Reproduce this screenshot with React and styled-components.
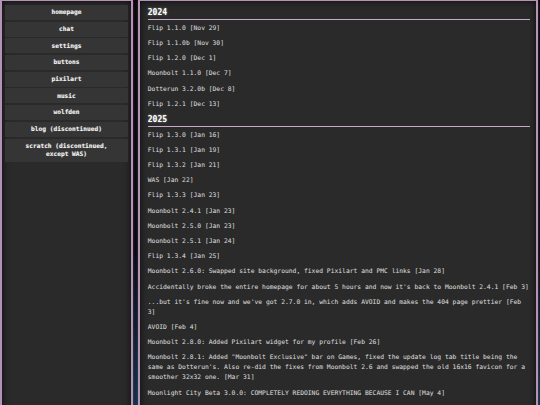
import React from "react";
import styled, { createGlobalStyle } from "styled-components";

const GlobalStyle = createGlobalStyle`
  html, body {
    margin: 0;
    padding: 0;
  }
  body {
    background: linear-gradient(180deg, #040406 0%, #07070c 55%, #0b2536 80%, #0f3a52 100%);
    font-family: "DejaVu Sans Mono", "Liberation Mono", monospace;
    overflow: hidden;
  }
`;

const links = [
  "homepage",
  "chat",
  "settings",
  "buttons",
  "pixilart",
  "music",
  "wolfden",
  "blog (discontinued)",
  "scratch (discontinued, except WAS)",
];

const log = [
  {
    year: "2024",
    items: [
      "Flip 1.1.0 [Nov 29]",
      "Flip 1.1.0b [Nov 30]",
      "Flip 1.2.0 [Dec 1]",
      "Moonbolt 1.1.0 [Dec 7]",
      "Dotterun 3.2.0b [Dec 8]",
      "Flip 1.2.1 [Dec 13]",
    ],
  },
  {
    year: "2025",
    items: [
      "Flip 1.3.0 [Jan 16]",
      "Flip 1.3.1 [Jan 19]",
      "Flip 1.3.2 [Jan 21]",
      "WAS [Jan 22]",
      "Flip 1.3.3 [Jan 23]",
      "Moonbolt 2.4.1 [Jan 23]",
      "Moonbolt 2.5.0 [Jan 23]",
      "Moonbolt 2.5.1 [Jan 24]",
      "Flip 1.3.4 [Jan 25]",
      "Moonbolt 2.6.0: Swapped site background, fixed Pixilart and PMC links [Jan 28]",
      "Accidentally broke the entire homepage for about 5 hours and now it's back to Moonbolt 2.4.1 [Feb 3]",
      "...but it's fine now and we've got 2.7.0 in, which adds AVOID and makes the 404 page prettier [Feb 3]",
      "AVOID [Feb 4]",
      "Moonbolt 2.8.0: Added Pixilart widget for my profile [Feb 26]",
      'Moonbolt 2.8.1: Added "Moonbolt Exclusive" bar on Games, fixed the update log tab title being the same as Dotterun\'s. Also re-did the fixes from Moonbolt 2.6 and swapped the old 16x16 favicon for a smoother 32x32 one. [Mar 31]',
      "Moonlight City Beta 3.0.0: COMPLETELY REDOING EVERYTHING BECAUSE I CAN [May 4]",
      "Moonlight City 3.0.0: FULL RELEASE [May 7]",
      "Moonlight City 3.0.1: Small fixes [May 9]",
    ],
  },
];

const App = () => {
  return (
    <>
      <GlobalStyle />
      <Page>
        <Sidebar>
          {links.map((link) => (
            <NavButton key={link}>{link}</NavButton>
          ))}
        </Sidebar>
        <Main>
          {log.map((group) => (
            <section key={group.year}>
              <Year>{group.year}</Year>
              {group.items.map((item) => (
                <Entry key={item}>{item}</Entry>
              ))}
            </section>
          ))}
        </Main>
      </Page>
    </>
  );
};

const Page = styled.div`
  display: flex;
  align-items: stretch;
  gap: 5px;
  width: 540px;
  min-height: 100vh;
`;

const Panel = styled.div`
  box-sizing: border-box;
  background: #2a2a2a;
  border: 2px solid #b593b5;
  border-top-width: 1px;
  box-shadow: inset 0 0 7px rgba(0, 0, 0, 0.75), 0 0 3px rgba(190, 150, 200, 0.35);
`;

const Sidebar = styled(Panel)`
  width: 133px;
  flex-shrink: 0;
  padding: 4px 3px;
  display: flex;
  flex-direction: column;
  gap: 1.7px;
`;

const NavButton = styled.div`
  background: #353535;
  color: #f2f2f2;
  font-size: 6.2px;
  font-weight: bold;
  line-height: 8.4px;
  text-align: center;
  padding: 3.3px 14px;
  text-shadow: 0 0 1px rgba(255, 255, 255, 0.4);
  cursor: pointer;
`;

const Main = styled(Panel)`
  width: 400px;
  flex-shrink: 0;
  padding: 6.2px 6px 20px 7.8px;
`;

const Year = styled.h2`
  margin: 0 0 2.4px;
  padding-bottom: 1.3px;
  border-bottom: 1px solid #c9a9c9;
  color: #ffffff;
  font-size: 8px;
  font-weight: bold;
  line-height: 11px;
  text-shadow: 0 0 2px rgba(255, 255, 255, 0.55);
`;

const Entry = styled.p`
  margin: 0 0 5.2px;
  color: #d6d6d6;
  font-size: 6.33px;
  line-height: 10px;
  width: 382px;
  text-shadow: 0 0 1px rgba(255, 255, 255, 0.2);
`;

export default App;
